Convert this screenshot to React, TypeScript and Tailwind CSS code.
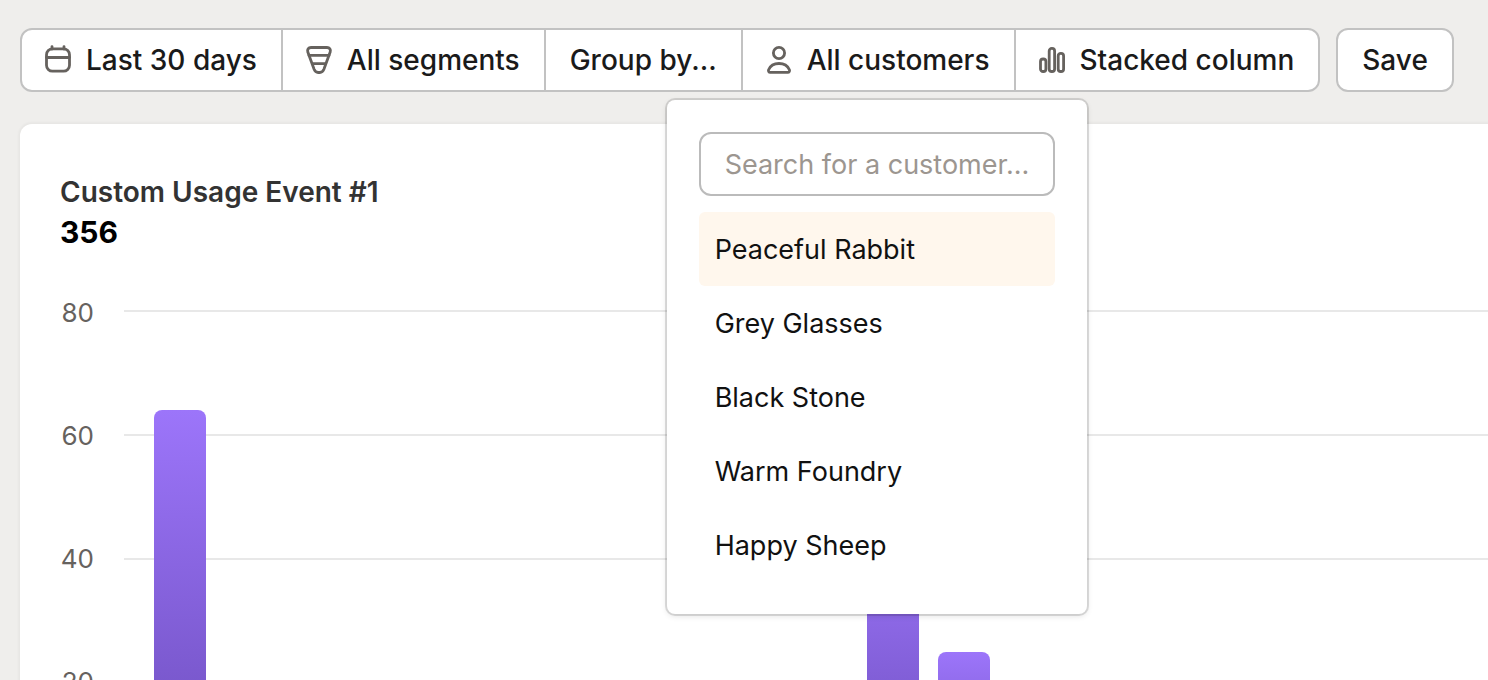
import { useState } from 'react'
import type { ReactNode } from 'react'

const customers = ['Peaceful Rabbit', 'Grey Glasses', 'Black Stone', 'Warm Foundry', 'Happy Sheep']

const usage = [
  { day: 0, value: 64 },
  { day: 10, value: 45 },
  { day: 11, value: 25 },
]

const ticks = [80, 60, 40, 20, 0]
const PLOT_HEIGHT = 495
const BAR_OFFSET = 30
const DAY_WIDTH = 71.35

export default function App() {
  const [search, setSearch] = useState('')
  const [selected, setSelected] = useState(customers[0])

  const visible = customers.filter((name) => name.toLowerCase().includes(search.toLowerCase()))

  return (
    <div className="h-screen overflow-hidden bg-[#efeeec] pl-5 pt-7 font-['Inter',sans-serif] text-[28px] leading-9">
      <div className="flex gap-4">
        <div className="flex h-16 divide-x-2 divide-[#c2c2c2] rounded-xl border-2 border-[#c2c2c2] bg-white">
          <ToolbarButton icon={<CalendarIcon />}>Last 30 days</ToolbarButton>
          <ToolbarButton icon={<FunnelIcon />}>All segments</ToolbarButton>
          <ToolbarButton>Group by...</ToolbarButton>
          <div className="relative flex">
            <ToolbarButton icon={<PersonIcon />}>All customers</ToolbarButton>
            {/* Customer picker */}
            <div className="absolute -left-[76px] top-full z-10 mt-2.5 w-[420px] rounded-lg bg-white p-8 text-[27px] shadow-[0_0_0_2px_rgba(0,0,0,0.12),0_2px_6px_rgba(0,0,0,0.12)]">
              <input
                type="text"
                aria-label="Search for a customer"
                placeholder="Search for a customer..."
                value={search}
                onChange={(e) => setSearch(e.target.value)}
                className="h-16 w-full rounded-xl border-2 border-[#bbb] bg-white pl-6 pr-4 outline-none placeholder:text-[#9c9690]"
              />
              <ul className="mt-4">
                {visible.map((name) => (
                  <li key={name}>
                    <button
                      onClick={() => setSelected(name)}
                      className={`h-[74px] w-full rounded-md px-4 pt-0.5 text-left text-[#111] ${name === selected ? 'bg-[#fff7ed]' : ''}`}
                    >
                      {name}
                    </button>
                  </li>
                ))}
              </ul>
            </div>
          </div>
          <ToolbarButton icon={<ColumnsIcon />}>Stacked column</ToolbarButton>
        </div>
        <button className="h-16 rounded-xl border-2 border-[#c2c2c2] bg-white px-6 font-medium text-[#1a1a1a]">Save</button>
      </div>

      <div className="mt-8 rounded-tl-xl bg-white pl-10 pt-12 shadow-[0_0_2px_2px_rgba(0,0,0,0.03)]">
        <h2 className="font-semibold leading-10 text-[#333]">Custom Usage Event #1</h2>
        <p className="text-[30px] font-bold leading-10 text-black">356</p>
        <UsageChart />
      </div>
    </div>
  )
}

function UsageChart() {
  return (
    <div className="mt-[58px] flex gap-[30px] pb-10">
      <div className="-mt-[15px] flex w-[34px] flex-col text-right text-[26px] text-[#66625e]">
        {ticks.map((tick) => (
          <div key={tick} className="h-[123px]">{tick}</div>
        ))}
      </div>
      <svg className="h-[497px] flex-1" role="img" aria-label="Usage per day">
        <defs>
          <linearGradient id="bar" x1="0" y1="0" x2="0" y2="1">
            <stop offset="0" stopColor="#9c75fa" />
            <stop offset="1" stopColor="#6b4cba" />
          </linearGradient>
        </defs>
        {ticks.map((tick, i) => (
          <rect key={tick} x="0" y={Math.round((i * PLOT_HEIGHT) / 4)} width="100%" height="2" fill="#e8e8e8" />
        ))}
        {usage.map(({ day, value }) => {
          const height = Math.floor((value / 80) * PLOT_HEIGHT)
          return (
            <rect
              key={day}
              x={Math.floor(BAR_OFFSET + day * DAY_WIDTH)}
              y={PLOT_HEIGHT - height + 1}
              width="52"
              height={height}
              rx="8"
              fill="url(#bar)"
            />
          )
        })}
      </svg>
    </div>
  )
}

const ToolbarButton = ({ icon, children }: { icon?: ReactNode, children: ReactNode }) => (
  <button className="flex items-center gap-3.5 whitespace-nowrap px-6 font-medium text-[#1a1a1a]">
    {icon}
    {children}
  </button>
)

const Icon = ({ children }: { children: ReactNode }) => (
  <svg
    viewBox="0 0 28 28"
    className="-ml-0.5 size-7 overflow-visible"
    fill="none"
    stroke="#66625e"
    strokeWidth="2.8"
    strokeLinecap="round"
    strokeLinejoin="round"
    aria-hidden="true"
  >
    {children}
  </svg>
)

const CalendarIcon = () => (
  <Icon>
    <rect x="2.5" y="2.8" width="23" height="22.4" rx="6" />
    <path d="M2.5 11.5h23M8 .6V3M20 .6V3" />
  </Icon>
)

const FunnelIcon = () => (
  <Icon>
    <path d="M6 1.5h16c2.6 0 4 2.2 3.2 4.6l-6.3 17.2c-.8 2-2.2 3.2-4 3.2h-1.8c-1.8 0-3.2-1.2-4-3.2L2.8 6.1C2 3.7 3.4 1.5 6 1.5z" />
    <path d="M4 9.4h20M7.4 17.7h13.2" />
  </Icon>
)

const PersonIcon = () => (
  <Icon>
    <circle cx="14" cy="7" r="5.6" />
    <path d="M14 17.5c-5 0-8.8 2.6-10.4 6.3-.5 1.3.2 2.6 1.6 2.6h17.6c1.4 0 2.1-1.3 1.6-2.6C22.8 20.1 19 17.5 14 17.5z" />
  </Icon>
)

const ColumnsIcon = () => (
  <Icon>
    <rect x="2.5" y="13" width="5.4" height="12.5" rx="2.6" />
    <rect x="11.2" y="2.4" width="5.4" height="23.1" rx="2.6" />
    <rect x="20.2" y="7.3" width="5.4" height="18.2" rx="2.6" />
  </Icon>
)
